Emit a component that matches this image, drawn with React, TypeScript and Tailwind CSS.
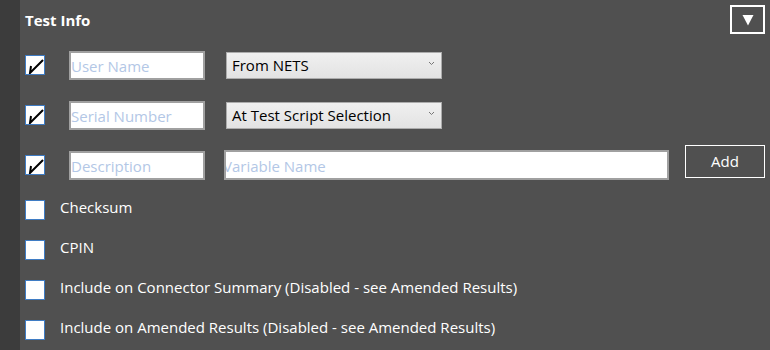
import React from "react";

const font = { fontFamily: '"Open Sans", "Noto Sans", sans-serif' };

function Check({ checked }: { checked?: boolean }) {
  return (
    <div className="w-[20px] h-[20px] shrink-0 bg-white border border-[#3f7cc4] flex items-center justify-center">
      {checked && (
        <svg width="18" height="18" viewBox="0 0 18 18">
          <path d="M5 10 L4 17 L17 4" fill="none" stroke="#000" strokeWidth="2" strokeLinejoin="miter" />
        </svg>
      )}
    </div>
  );
}

function TextInput({ placeholder, className }: { placeholder: string; className: string }) {
  return (
    <div className={`h-[29px] bg-white border-2 border-[#a0a0a0] flex items-center overflow-hidden ${className}`}>
      <span className="text-[15px] text-[#b3c7e6] leading-none pt-[3px] whitespace-nowrap">{placeholder}</span>
    </div>
  );
}

function Select({ value }: { value: string }) {
  return (
    <div className="ml-[21px] w-[216px] h-[27px] border border-[#acacac] bg-gradient-to-b from-[#f0f0f0] to-[#e3e3e3] flex items-center justify-between pl-[5px] pr-[6px]">
      <span className="text-[15px] text-black leading-none pt-[1px]">{value}</span>
      <svg width="7" height="5" viewBox="0 0 7 5" className="mb-[4px]">
        <path d="M1 1 L3.5 3.5 L6 1" fill="none" stroke="#777" strokeWidth="1" />
      </svg>
    </div>
  );
}

function LabelRow({ label }: { label: string }) {
  return (
    <div className="h-[40px] flex items-center">
      <Check />
      <span className="ml-[15px] text-[15px] text-white leading-none mb-[5px]">{label}</span>
    </div>
  );
}

export default function App() {
  return (
    <div className="w-[770px] h-[350px] flex overflow-hidden" style={font}>
      <div className="w-[20px] shrink-0 bg-[#3c3c3c]" />
      <div className="flex-1 bg-[#505050] pl-[5px] pr-[5px] flex flex-col">
        <div className="h-[40px] flex justify-between items-start">
          <span className="mt-[13px] text-[15px] font-bold text-white leading-none">Test Info</span>
          <div className="mt-[5px] w-[35px] h-[29px] border-2 border-white flex items-center justify-center">
            <svg width="12" height="12" viewBox="0 0 12 12">
              <path d="M0.5 1 L11.5 1 L6 11.5 Z" fill="#fff" />
            </svg>
          </div>
        </div>
        <div className="h-[50px] flex items-center">
          <Check checked />
          <TextInput placeholder="User Name" className="ml-[24px] w-[136px]" />
          <Select value="From NETS" />
        </div>
        <div className="h-[50px] flex items-center">
          <Check checked />
          <TextInput placeholder="Serial Number" className="ml-[24px] w-[136px]" />
          <Select value="At Test Script Selection" />
        </div>
        <div className="h-[50px] flex items-center">
          <Check checked />
          <TextInput placeholder="Description" className="ml-[24px] w-[136px]" />
          <div className="ml-[19px] w-[445px] h-[30px] bg-white border-2 border-[#a0a0a0] flex items-center overflow-hidden">
            <span className="text-[15px] text-[#b3c7e6] leading-none pt-[3px] whitespace-nowrap -ml-[3px]">Variable Name</span>
          </div>
          <div className="ml-[16px] self-start mt-[5px] w-[80px] h-[33px] border border-white flex items-center justify-center">
            <span className="text-[15px] text-white leading-none">Add</span>
          </div>
        </div>
        <LabelRow label="Checksum" />
        <LabelRow label="CPIN" />
        <LabelRow label="Include on Connector Summary (Disabled - see Amended Results)" />
        <LabelRow label="Include on Amended Results (Disabled - see Amended Results)" />
      </div>
    </div>
  );
}
